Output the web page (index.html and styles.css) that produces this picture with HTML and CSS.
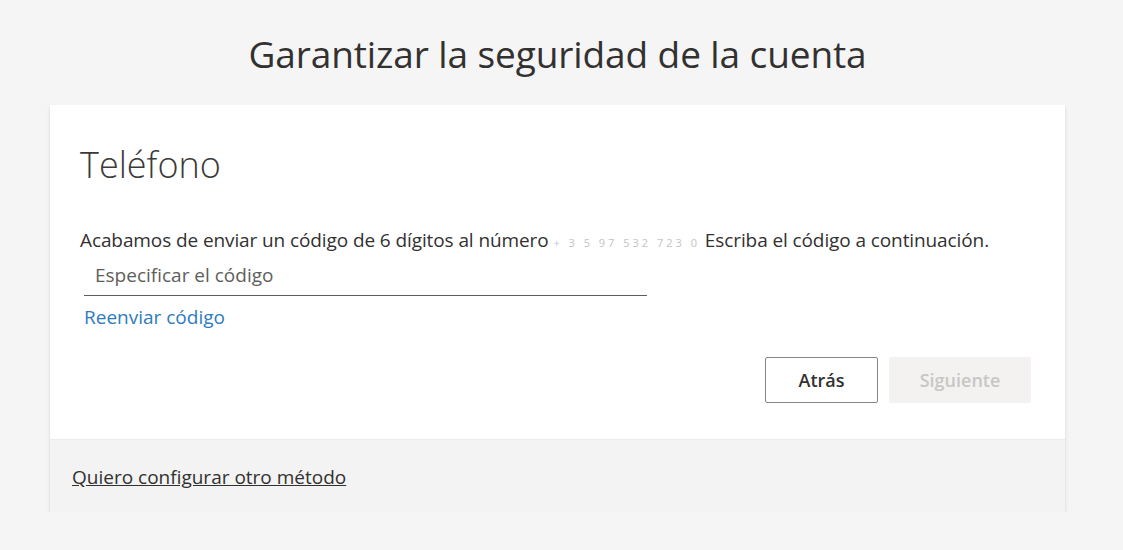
FILE: index.html
```html
<!DOCTYPE html>
<html lang="es">
<head>
<meta charset="utf-8">
<title>Garantizar la seguridad de la cuenta</title>
<link rel="stylesheet" href="styles.css">
</head>
<body>
<main class="page">
  <h1 class="title">Garantizar la seguridad de la cuenta</h1>
  <section class="card">
    <div class="card-body">
      <h2 class="heading">Teléfono</h2>
      <p class="desc">Acabamos de enviar un código de 6 dígitos al número <span class="redacted">+ 3 5 97 532 723 0</span> Escriba el código a continuación.</p>
      <div class="field">
        <input class="code-input" type="text" placeholder="Especificar el código">
      </div>
      <a class="resend" href="#">Reenviar código</a>
      <div class="actions">
        <button class="btn btn-back" type="button">Atrás</button>
        <button class="btn btn-next" type="button" disabled>Siguiente</button>
      </div>
    </div>
    <div class="card-footer">
      <a class="other" href="#">Quiero configurar otro método</a>
    </div>
  </section>
</main>
</body>
</html>
```

FILE: styles.css
```css
* { box-sizing: border-box; }
html, body { margin: 0; padding: 0; }
body {
  background: #f5f5f5;
  font-family: "Open Sans", "Noto Sans", sans-serif;
  color: #323130;
}
.page {
  width: 1015px;
  margin: 0 0 0 50px;
  padding-top: 29px;
}
.title {
  margin: 0 0 26px;
  text-align: center;
  font-weight: 400;
  font-size: 37px;
  line-height: 50px;
  color: #323130;
  letter-spacing: -0.1px;
}
.card {
  background: #fff;
  box-shadow: 0 1.6px 3.6px rgba(0,0,0,0.13), 0 0.3px 0.9px rgba(0,0,0,0.11);
}
.card-body {
  padding: 36px 34px 36px 30px;
  display: flex;
  flex-direction: column;
}
.heading {
  margin: 0 0 38px;
  font-weight: 300;
  font-size: 36px;
  line-height: 48px;
  color: #3b3a39;
}
.desc {
  margin: 0;
  height: 26px;
  font-size: 19px;
  line-height: 26px;
  color: #323130;
  letter-spacing: -0.1px;
  white-space: nowrap;
}
.redacted {
  color: #c4c4c4;
  font-size: 11px;
  line-height: 1;
  letter-spacing: 3px;
}
.field {
  margin-left: 4px;
  width: 563px;
  border-bottom: 1px solid #605e5c;
}
.code-input {
  display: block;
  width: 100%;
  border: 0;
  outline: none;
  background: transparent;
  padding: 9px 10px 7px 11px;
  font-family: inherit;
  font-size: 19px;
  line-height: 26px;
  height: 42px;
  color: #323130;
}
.code-input::placeholder { color: #605e5c; }
.resend {
  margin: 8px 0 0 4px;
  align-self: flex-start;
  font-size: 19px;
  line-height: 26px;
  color: #2e7bbd;
  text-decoration: none;
}
.actions {
  margin-top: 27px;
  display: flex;
  justify-content: flex-end;
  gap: 11px;
}
.btn {
  height: 46px;
  font-family: inherit;
  font-size: 18px;
  font-weight: 600;
  border-radius: 2px;
}
.btn-back {
  width: 113px;
  background: #fff;
  border: 1px solid #8a8886;
  color: #323130;
}
.btn-next {
  width: 142px;
  background: #f3f2f1;
  border: 1px solid #f3f2f1;
  color: #c8c6c4;
}
.card-footer {
  background: #f3f3f3;
  border-top: 1px solid #ececec;
  padding: 24px 22px 22px;
}
.other {
  font-size: 19px;
  line-height: 26px;
  color: #323130;
  text-decoration: underline;
}
```
